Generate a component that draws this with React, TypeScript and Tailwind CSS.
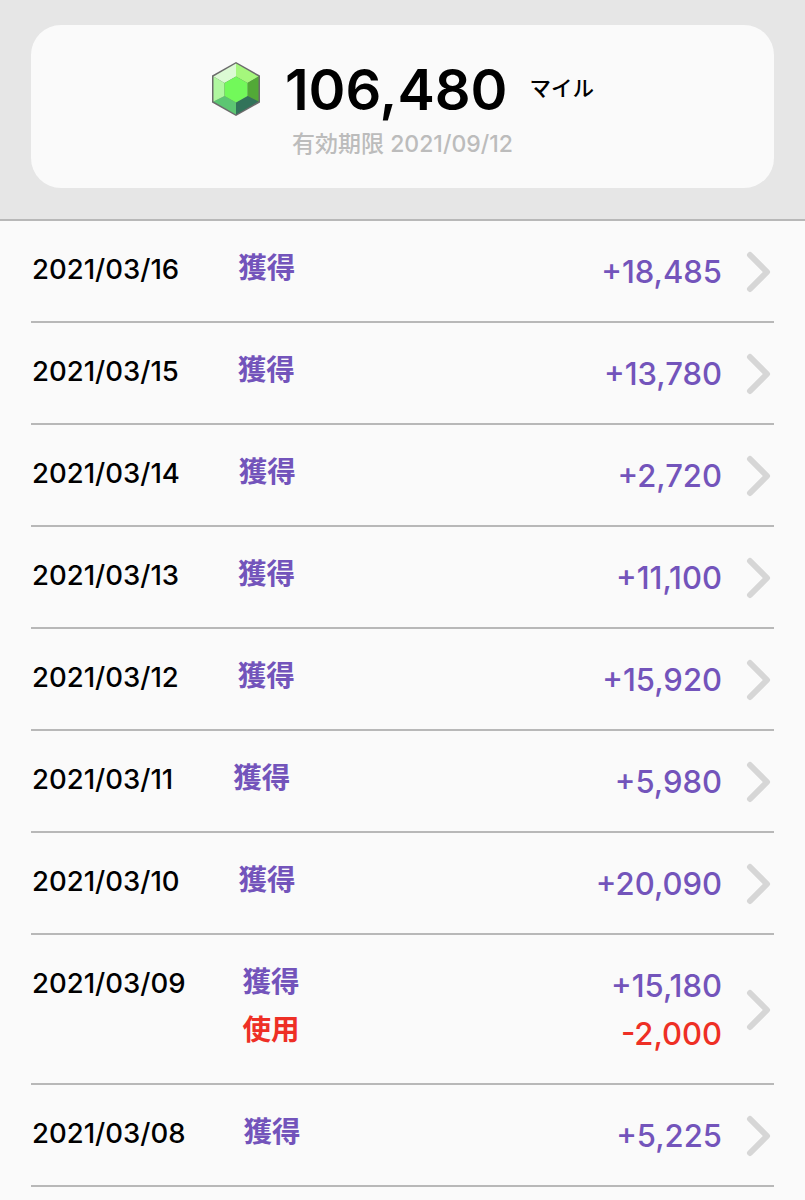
import React from "react";

const font = "font-['Inter','Noto_Sans_CJK_JP',sans-serif]";

interface Entry {
  date: string;
  labelGap: string;
  earned: string;
  used?: string;
}

const entries: Entry[] = [
  { date: "2021/03/16", labelGap: "ml-[59px]", earned: "+18,485" },
  { date: "2021/03/15", labelGap: "ml-[59px]", earned: "+13,780" },
  { date: "2021/03/14", labelGap: "ml-[59px]", earned: "+2,720" },
  { date: "2021/03/13", labelGap: "ml-[59px]", earned: "+11,100" },
  { date: "2021/03/12", labelGap: "ml-[59px]", earned: "+15,920" },
  { date: "2021/03/11", labelGap: "ml-[60px]", earned: "+5,980" },
  { date: "2021/03/10", labelGap: "ml-[59px]", earned: "+20,090" },
  { date: "2021/03/09", labelGap: "ml-[57px]", earned: "+15,180", used: "-2,000" },
  { date: "2021/03/08", labelGap: "ml-[58px]", earned: "+5,225" },
];

const Gem = () => (
  <svg width="50" height="56" viewBox="0 0 50 56" className="shrink-0">
    <polygon points="25,1 49,14.5 49,41.5 25,55 1,41.5 1,14.5" fill="#6b6b6b" />
    <polygon points="25,2.5 25,15.5 13.5,22 2.5,15.5" fill="#dcfad4" />
    <polygon points="25,2.5 47.5,15.5 36.5,22 25,15.5" fill="#a5f77c" />
    <polygon points="47.5,15.5 47.5,40.5 36.5,35 36.5,22" fill="#52a937" />
    <polygon points="47.5,40.5 25,53.5 25,41.5 36.5,35" fill="#32735a" />
    <polygon points="25,53.5 2.5,40.5 13.5,35 25,41.5" fill="#5cc672" />
    <polygon points="2.5,40.5 2.5,15.5 13.5,22 13.5,35" fill="#b0f7a0" />
    <polygon points="25,15.5 36.5,22 36.5,35 25,41.5 13.5,35 13.5,22" fill="#72f95a" />
  </svg>
);

const Chevron = () => (
  <svg width="26" height="42" viewBox="0 0 26 42" className="shrink-0">
    <path
      d="M4 4 L21 21 L4 38"
      fill="none"
      stroke="#d6d6d6"
      strokeWidth="6"
      strokeLinecap="round"
      strokeLinejoin="round"
    />
  </svg>
);

const Row = ({ entry }: { entry: Entry }) => (
  <div className="flex border-b-2 border-[#b8b8b8] pt-[23px]">
    <div className="flex-1 flex items-start pl-px">
      <span className="text-[27.5px] leading-[50px] font-medium text-black">{entry.date}</span>
      <div className={`${entry.labelGap} flex flex-col`}>
        <span className="text-[28.5px] leading-[48px] font-semibold text-[#7354bb]">獲得</span>
        {entry.used && (
          <span className="text-[28.5px] leading-[48px] font-semibold text-[#ee2f25]">使用</span>
        )}
      </div>
    </div>
    <div className="flex flex-col items-end pb-[25px]">
      <span className="text-[31px] leading-[48px] pt-[4px] font-medium text-[#7354bb]">
        {entry.earned}
      </span>
      {entry.used && (
        <span className="text-[31px] leading-[48px] font-medium text-[#ee2f25]">{entry.used}</span>
      )}
    </div>
    <div className="ml-[24px] mr-[2px] self-center -mt-[21px]">
      <Chevron />
    </div>
  </div>
);

export default function App() {
  return (
    <div className={`${font} w-[805px] h-[1200px] overflow-hidden bg-[#fafafa]`}>
      <div className="h-[221px] bg-[#e6e6e6] border-b-2 border-[#b8b8b8] px-[31px] pt-[25px]">
        <div className="h-[163px] rounded-[30px] bg-[#fafafa] flex flex-col items-center pt-[36px]">
          <div className="flex items-center h-[56px]">
            <Gem />
            <span className="ml-[24px] mt-[1px] text-[56px] font-semibold text-black leading-none">
              106,480
            </span>
            <span className="ml-[22px] -mt-[2px] text-[21.5px] font-medium text-black">マイル</span>
          </div>
          <div className="mt-[13px] text-[23px] leading-[28px] font-medium text-[#bcbcbc]">
            有効期限 2021/09/12
          </div>
        </div>
      </div>
      <div className="pl-[31px] pr-[31px]">
        {entries.map((entry) => (
          <Row key={entry.date} entry={entry} />
        ))}
      </div>
    </div>
  );
}
